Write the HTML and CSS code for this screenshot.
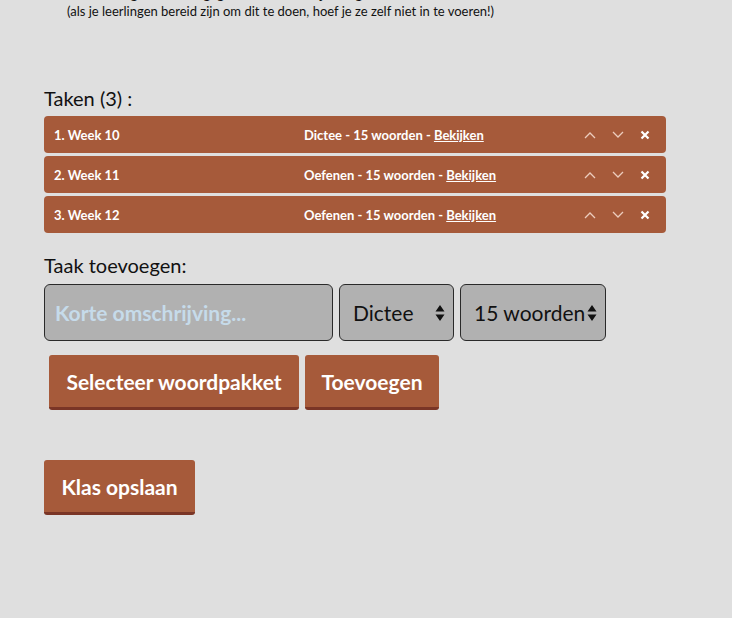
FILE: index.html
```html
<!DOCTYPE html>
<html lang="nl">
<head>
<meta charset="utf-8">
<title>Klas bewerken</title>
<link rel="stylesheet" href="styles.css">
</head>
<body>
<div class="page">
  <p class="cut">Laat leerlingen zelf hun gegevens invullen bij de registratie</p>
  <p class="note">(als je leerlingen bereid zijn om dit te doen, hoef je ze zelf niet in te voeren!)</p>

  <h2 class="label taken-label">Taken (3) :</h2>
  <div class="tasks">
    <div class="task">
      <span class="task-name">1. Week 10</span>
      <span class="task-info">Dictee - 15 woorden - <a href="#">Bekijken</a></span>
      <span class="task-actions">
        <svg class="chev" viewBox="0 0 12 8" width="12" height="8"><path d="M1 7 L6 2 L11 7"/></svg>
        <svg class="chev" viewBox="0 0 12 8" width="12" height="8"><path d="M1 1 L6 6 L11 1"/></svg>
        <svg class="close" viewBox="0 0 10 10" width="10" height="10"><path d="M1.5 1.5 L8.5 8.5 M8.5 1.5 L1.5 8.5"/></svg>
      </span>
    </div>
    <div class="task">
      <span class="task-name">2. Week 11</span>
      <span class="task-info">Oefenen - 15 woorden - <a href="#">Bekijken</a></span>
      <span class="task-actions">
        <svg class="chev" viewBox="0 0 12 8" width="12" height="8"><path d="M1 7 L6 2 L11 7"/></svg>
        <svg class="chev" viewBox="0 0 12 8" width="12" height="8"><path d="M1 1 L6 6 L11 1"/></svg>
        <svg class="close" viewBox="0 0 10 10" width="10" height="10"><path d="M1.5 1.5 L8.5 8.5 M8.5 1.5 L1.5 8.5"/></svg>
      </span>
    </div>
    <div class="task">
      <span class="task-name">3. Week 12</span>
      <span class="task-info">Oefenen - 15 woorden - <a href="#">Bekijken</a></span>
      <span class="task-actions">
        <svg class="chev" viewBox="0 0 12 8" width="12" height="8"><path d="M1 7 L6 2 L11 7"/></svg>
        <svg class="chev" viewBox="0 0 12 8" width="12" height="8"><path d="M1 1 L6 6 L11 1"/></svg>
        <svg class="close" viewBox="0 0 10 10" width="10" height="10"><path d="M1.5 1.5 L8.5 8.5 M8.5 1.5 L1.5 8.5"/></svg>
      </span>
    </div>
  </div>

  <h2 class="label add-label">Taak toevoegen:</h2>
  <div class="add-row">
    <input class="field" type="text" placeholder="Korte omschrijving...">
    <div class="select select-type">
      <span>Dictee</span>
      <svg class="updown" viewBox="0 0 10 18" width="10" height="18"><path d="M5 1 L9.5 7.5 L0.5 7.5 Z M5 17 L9.5 10.5 L0.5 10.5 Z"/></svg>
    </div>
    <div class="select select-count">
      <span>15 woorden</span>
      <svg class="updown" viewBox="0 0 10 18" width="10" height="18"><path d="M5 1 L9.5 7.5 L0.5 7.5 Z M5 17 L9.5 10.5 L0.5 10.5 Z"/></svg>
    </div>
  </div>
  <div class="btn-row">
    <button class="btn btn-select">Selecteer woordpakket</button>
    <button class="btn btn-add">Toevoegen</button>
  </div>

  <div class="save-row">
    <button class="btn btn-save">Klas opslaan</button>
  </div>
</div>
</body>
</html>
```

FILE: styles.css
```css
html, body {
  margin: 0;
  padding: 0;
  background: #dfdfdf;
}
body {
  font-family: Lato, "Noto Sans", sans-serif;
  color: #111;
}
.page {
  padding-left: 44px;
  width: 622px;
}
.cut {
  margin: -14px 0 0 23px;
  font-size: 13px;
  font-weight: 700;
  line-height: 17px;
}
.note {
  margin: 0 0 0 23px;
  font-size: 13px;
  line-height: 16px;
}
.label {
  font-size: 20px;
  font-weight: 400;
  margin: 0;
  line-height: 24px;
}
.taken-label {
  margin-top: 67px;
  margin-bottom: 6px;
}
.tasks {
  display: flex;
  flex-direction: column;
  gap: 3px;
}
.task {
  display: grid;
  grid-template-columns: 250px 1fr auto;
  align-items: center;
  height: 37px;
  padding: 0 16px 0 10px;
  background: #a65a3a;
  border-radius: 4px;
  color: #fff;
  font-size: 13px;
  font-weight: 700;
}
.task-info a {
  color: #fff;
  text-decoration: underline;
}
.task-actions {
  display: flex;
  align-items: center;
  gap: 16px;
}
.chev {
  fill: none;
  stroke: #ecccbd;
  stroke-width: 1.3;
}
.close {
  fill: none;
  stroke: #fff;
  stroke-width: 2.2;
}
.add-label {
  margin-top: 20px;
  margin-bottom: 7px;
}
.add-row {
  display: flex;
  gap: 6px;
}
.field, .select {
  box-sizing: border-box;
  height: 57px;
  background: #b1b1b1;
  border: 1px solid #2a2a2a;
  border-radius: 6px;
  font-family: inherit;
  font-size: 21px;
  color: #111;
}
.field {
  width: 289px;
  padding: 0 10px;
  outline: none;
}
.field::placeholder {
  color: #c6dbea;
  opacity: 1;
  font-weight: 700;
  font-size: 21px;
}
.select {
  display: flex;
  align-items: center;
  justify-content: space-between;
  padding: 0 8px 0 13px;
}
.select-type { width: 115px; }
.select-count { width: 146px; }
.updown {
  fill: #111;
}
.btn-row {
  display: flex;
  gap: 6px;
  margin: 14px 0 0 5px;
}
.btn {
  box-sizing: border-box;
  height: 55px;
  padding: 0 16px;
  background: #a65a3a;
  border: none;
  border-bottom: 3px solid #7a3526;
  border-radius: 3px;
  color: #fff;
  font-family: inherit;
  font-size: 21px;
  font-weight: 700;
}
.btn-select { width: 250px; }
.btn-add { width: 134px; }
.btn-save { width: 151px; }
.save-row {
  margin-top: 50px;
}
```
